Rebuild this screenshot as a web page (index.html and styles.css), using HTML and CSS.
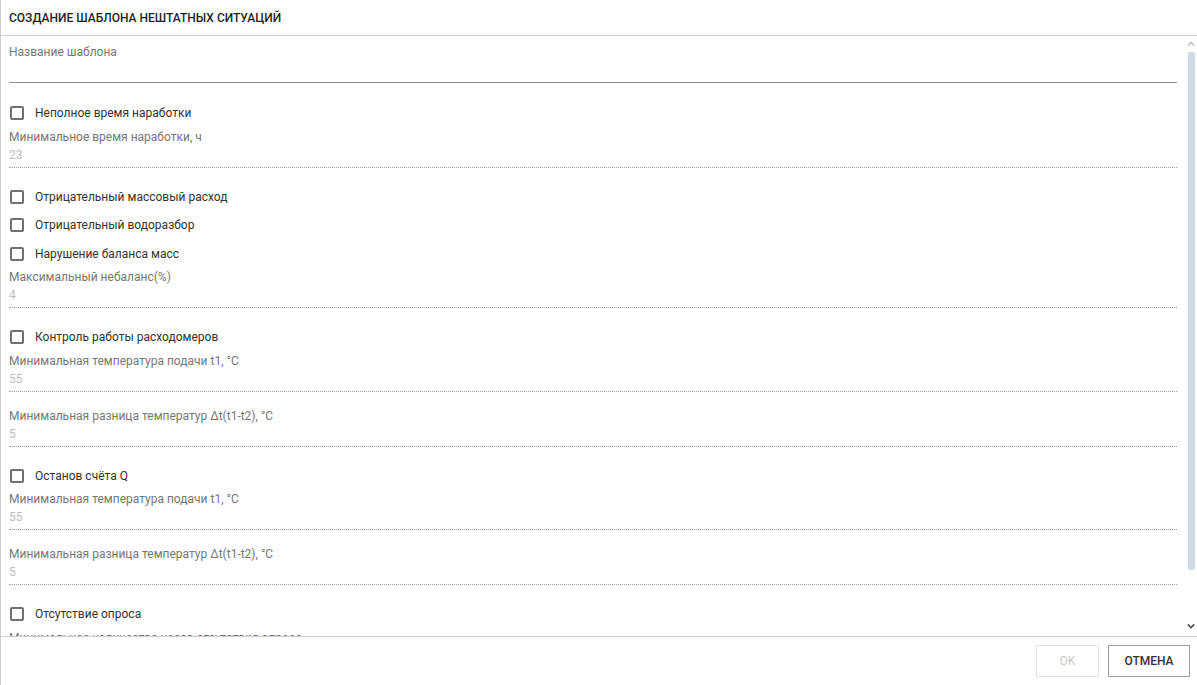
FILE: index.html
```html
<!DOCTYPE html>
<html lang="ru">
<head>
<meta charset="utf-8">
<title>Создание шаблона</title>
<link rel="stylesheet" href="styles.css">
</head>
<body>
<div class="dialog">
  <div class="dialog-header">СОЗДАНИЕ ШАБЛОНА НЕШТАТНЫХ СИТУАЦИЙ</div>
  <div class="body-wrap">
    <div class="dialog-body">
      <div class="name-field">
        <div class="field-label">Название шаблона</div>
        <div class="name-input"></div>
      </div>

      <div class="group group-first">
        <label class="check-row"><span class="box"></span><span>Неполное время наработки</span></label>
        <div class="field"><div class="field-label">Минимальное время наработки, ч</div><div class="field-value">23</div></div>
      </div>

      <div class="group">
        <label class="check-row"><span class="box"></span><span>Отрицательный массовый расход</span></label>
        <label class="check-row"><span class="box"></span><span>Отрицательный водоразбор</span></label>
        <label class="check-row"><span class="box"></span><span>Нарушение баланса масс</span></label>
        <div class="field"><div class="field-label">Максимальный небаланс(%)</div><div class="field-value">4</div></div>
      </div>

      <div class="group">
        <label class="check-row"><span class="box"></span><span>Контроль работы расходомеров</span></label>
        <div class="field"><div class="field-label">Минимальная температура подачи t1, °C</div><div class="field-value">55</div></div>
        <div class="field"><div class="field-label">Минимальная разница температур Δt(t1-t2), °C</div><div class="field-value">5</div></div>
      </div>

      <div class="group">
        <label class="check-row"><span class="box"></span><span>Останов счёта Q</span></label>
        <div class="field"><div class="field-label">Минимальная температура подачи t1, °C</div><div class="field-value">55</div></div>
        <div class="field"><div class="field-label">Минимальная разница температур Δt(t1-t2), °C</div><div class="field-value">5</div></div>
      </div>

      <div class="group">
        <label class="check-row"><span class="box"></span><span>Отсутствие опроса</span></label>
        <div class="field"><div class="field-label">Минимальное количество часов отсутствия опроса</div><div class="field-value">24</div></div>
      </div>
    </div>
    <div class="scrollbar">
      <svg class="sb-arrow sb-up" width="8" height="6" viewBox="0 0 8 6"><path d="M0.8 4.6 L4 1.4 L7.2 4.6" fill="none" stroke="#c4c4c4" stroke-width="1.6"/></svg>
      <div class="sb-thumb"></div>
      <svg class="sb-arrow sb-down" width="8" height="6" viewBox="0 0 8 6"><path d="M0.8 1.4 L4 4.6 L7.2 1.4" fill="none" stroke="#505050" stroke-width="1.6"/></svg>
    </div>
  </div>
  <div class="dialog-footer">
    <button class="btn btn-disabled">OK</button>
    <button class="btn btn-cancel">ОТМЕНА</button>
  </div>
</div>
</body>
</html>
```

FILE: styles.css
```css
html, body {
  margin: 0;
  padding: 0;
  background: #fff;
}
body {
  font-family: Roboto, "Liberation Sans", Arial, sans-serif;
  font-size: 12px;
  color: #212121;
}
.dialog {
  width: 1197px;
  height: 685px;
  box-sizing: border-box;
  border-left: 1px solid #cfcfcf;
  display: flex;
  flex-direction: column;
}
.dialog-header {
  height: 33px;
  padding-top: 2px;
  line-height: 33px;
  padding-left: 8px;
  font-size: 12px;
  font-weight: 500;
  color: #1f1f1f;
  border-bottom: 1px solid #cfcfcf;
  flex: none;
}
.body-wrap {
  flex: 1;
  position: relative;
  overflow: hidden;
}
.dialog-body {
  height: 100%;
  overflow: hidden;
  padding: 7px 20px 10px 8px;
  box-sizing: border-box;
}
.scrollbar {
  position: absolute;
  top: 0;
  right: 0;
  bottom: 0;
  width: 12px;
  display: flex;
  flex-direction: column;
  align-items: center;
}
.sb-arrow {
  flex: none;
  display: block;
}
.sb-up {
  margin-top: 5px;
}
.sb-thumb {
  width: 7px;
  height: 518px;
  margin-top: 5px;
  margin-left: 1px;
  background: #cfdbe5;
  border-radius: 2px;
}
.sb-down {
  margin-top: 53px;
}
.field-label {
  height: 18px;
  line-height: 18px;
  color: #777;
  white-space: nowrap;
}
.name-input {
  height: 21px;
  border-bottom: 1px solid #8e8e8e;
}
.group {
  margin-top: 15px;
}
.group-first {
  margin-top: 16px;
}
.check-row {
  display: flex;
  align-items: center;
  height: 28.5px;
  color: #333;
}
.box {
  width: 10px;
  height: 10px;
  border: 2px solid #707070;
  border-radius: 2px;
  margin-right: 11px;
  margin-left: 1px;
  flex: none;
}
.field + .field {
  margin-top: 15px;
}
.field-value {
  height: 18px;
  line-height: 18px;
  padding-bottom: 3px;
  color: #bdbdbd;
  border-bottom: 1px dotted #9a9a9a;
}
.dialog-footer {
  flex: none;
  height: 49px;
  border-top: 1px solid #cfcfcf;
  display: flex;
  justify-content: flex-end;
  align-items: center;
  gap: 9px;
  padding-right: 7px;
  box-sizing: border-box;
}
.btn {
  height: 32px;
  background: #fff;
  font-family: Roboto, "Liberation Sans", Arial, sans-serif;
  font-size: 12px;
  font-weight: 500;
  padding: 0;
  box-sizing: border-box;
}
.btn-disabled {
  width: 63px;
  border: 1px solid #e3e3e3;
  color: #c8c8c8;
  font-weight: 400;
}
.btn-cancel {
  width: 82px;
  border: 1px solid #9e9e9e;
  color: #333;
}
```
